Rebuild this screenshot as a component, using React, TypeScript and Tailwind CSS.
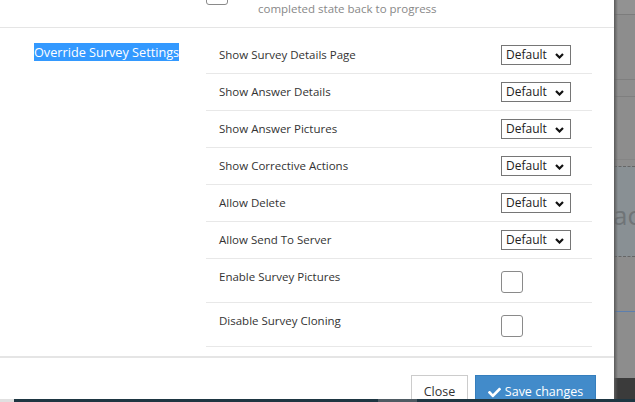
import React from 'react';
import { FaCheck } from 'react-icons/fa';

type Row = { label: string; kind: 'select' | 'checkbox' };

const rows: Row[] = [
  { label: 'Show Survey Details Page', kind: 'select' },
  { label: 'Show Answer Details', kind: 'select' },
  { label: 'Show Answer Pictures', kind: 'select' },
  { label: 'Show Corrective Actions', kind: 'select' },
  { label: 'Allow Delete', kind: 'select' },
  { label: 'Allow Send To Server', kind: 'select' },
  { label: 'Enable Survey Pictures', kind: 'checkbox' },
  { label: 'Disable Survey Cloning', kind: 'checkbox' },
];

const DefaultSelect = () => (
  <div className="flex items-center justify-between w-[70px] h-[20px] border border-[#767676] bg-white pl-[4px] pr-[6px] text-[12px] leading-none text-[#222]">
    <span>Default</span>
    <svg width="9" height="6" viewBox="0 0 9 6" className="mt-[1px]">
      <polyline points="1,1 4.5,4.5 8,1" fill="none" stroke="#111" strokeWidth="2.2" />
    </svg>
  </div>
);

const Checkbox = ({ className = '' }: { className?: string }) => (
  <div className={`w-[22px] h-[22px] shrink-0 rounded-[3px] border border-[#8a8a8a] bg-white ${className}`} />
);

const SettingRow = ({ row }: { row: Row }) =>
  row.kind === 'select' ? (
    <div className="flex items-center shrink-0 h-[37px] pl-[13px] border-b border-[#e8e8e8]">
      <span className="w-[282px] text-[11.5px] leading-[18px] text-[#333]">{row.label}</span>
      <DefaultSelect />
    </div>
  ) : (
    <div className="flex items-start shrink-0 h-[44px] pl-[13px] border-b border-[#e8e8e8]">
      <span className="w-[282px] mt-[9px] text-[11.5px] leading-[18px] text-[#333]">{row.label}</span>
      <Checkbox className="mt-[12px]" />
    </div>
  );

export default function App() {
  return (
    <div
      className="w-[635px] h-[402px] overflow-hidden flex flex-col bg-white"
      style={{ fontFamily: '"Open Sans", "Liberation Sans", sans-serif' }}
    >
      <div className="flex h-[399px] shrink-0">
        {/* modal */}
        <div className="w-[614px] bg-white flex flex-col overflow-hidden">
          {/* tail of the previous setting */}
          <div className="h-[28px] shrink-0 border-b border-[#e5e5e5] flex items-start pl-[206px]">
            <Checkbox className="-mt-[17px]" />
            <span className="ml-[30px] mt-0 text-[11.5px] leading-[18px] text-[#888]">
              completed state back to progress
            </span>
          </div>

          {/* override settings */}
          <div className="flex shrink-0 pt-[9px] pb-[9px]">
            <div className="w-[206px] pl-[34px] pt-[6px] flex items-start">
              <span className="bg-[#3399ff] text-white text-[12.7px] leading-[18px]">
                Override Survey Settings
              </span>
            </div>
            <div className="w-[386px] flex flex-col">
              {rows.map((r) => (
                <SettingRow key={r.label} row={r} />
              ))}
            </div>
          </div>

          {/* footer */}
          <div className="shrink-0 border-t-2 border-[#e5e5e5] flex justify-end gap-[7px] pt-[17px] pr-[18px]">
            <button className="h-[34px] w-[57px] border border-[#ccc] bg-white text-[12.5px] text-[#333]">
              Close
            </button>
            <button className="h-[34px] w-[121px] border border-[#357ebd] bg-[#428bca] text-[12.5px] text-white flex items-center justify-center gap-[4px]">
              <FaCheck className="w-[13px] h-[13px]" />
              Save changes
            </button>
          </div>
        </div>

        {/* page behind the backdrop */}
        <div className="relative flex-1 bg-[#8d8d8d] flex flex-col overflow-hidden">
          <div className="h-[15px] shrink-0 bg-[#929292] border-b border-[#7c7c7c]" />
          <div className="h-[65px] shrink-0 border-b border-[#7f7f7f]" />
          <div className="h-[17px] shrink-0 border-b border-[#7f7f7f]" />
          <div className="h-[63px] shrink-0 border-b border-[#858585]" />
          <div className="mt-[6px] h-[91px] shrink-0 border-y border-dashed border-[#666] bg-[#899094] flex items-center pt-[6px]">
            <span className="-ml-[1px] text-[26px] leading-none text-[#6f7477]">ac</span>
          </div>
          <div className="mt-[54px] h-px shrink-0 bg-[#5d7fae]" />
          <div className="mt-[66px] flex-1 bg-[#3b3b3b]" />
          <div className="absolute inset-y-0 left-0 w-[4px] bg-gradient-to-r from-[#5a5a5a] to-transparent" />
        </div>
      </div>

      {/* bottom edge of the page */}
      <div className="h-[3px] shrink-0 flex">
        <div className="w-[14px] bg-[#e0e0e0]" />
        <div className="w-[364px] bg-[#1e3642]" />
        <div className="w-[39px] bg-[#4f5b63]" />
        <div className="flex-1 bg-[#1e3642]" />
      </div>
    </div>
  );
}
